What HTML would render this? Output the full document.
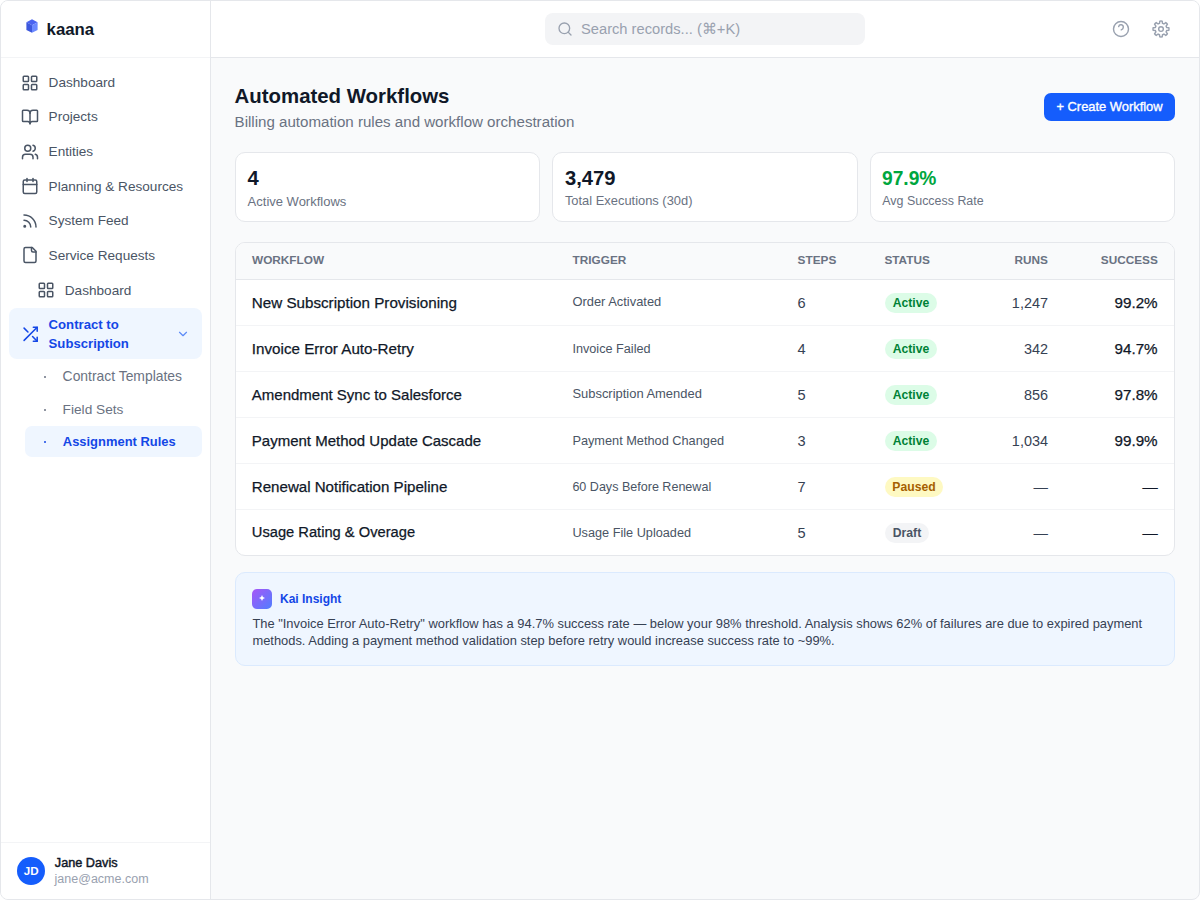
<!DOCTYPE html>
<html><head><meta charset="utf-8">
<style>
*{box-sizing:border-box;margin:0;padding:0}
html,body{width:1200px;height:900px;background:#fff;overflow:hidden}
body{font-family:"Liberation Sans",sans-serif;color:#101828;position:relative}
.frame{position:absolute;left:0;top:0;width:1200px;height:900px;border:1px solid #e5e7eb;border-radius:8px;overflow:hidden;background:#f9fafb}
.abs{position:absolute}
.t{position:absolute;line-height:1;white-space:nowrap}
.ic{position:absolute;overflow:visible}
.badge{position:absolute;height:20px;border-radius:10px}
</style></head><body>
<div class="frame"></div>
<!-- sidebar -->
<div class="abs" style="left:1px;top:1px;width:210px;height:898px;background:#fff;border-right:1px solid #e5e7eb;border-radius:7px 0 0 7px"></div>
<div class="abs" style="left:1px;top:57px;width:209px;height:1px;background:#f3f4f6"></div>
<div class="abs" style="left:1px;top:842px;width:209px;height:1px;background:#f3f4f6"></div>
<svg class="abs" style="left:26px;top:19px" width="12" height="14" viewBox="0 0 12 14">
  <polygon points="6,0.3 11.6,3.2 6,6.2 0.4,3.2" fill="#4a63f0"/>
  <polygon points="0.4,3.2 6,6.2 6,13.7 0.4,10.9" fill="#3d58dd"/>
  <polygon points="6,6.2 11.6,3.2 11.6,10.9 6,13.7" fill="#6b89ff"/>
</svg>
<div class="abs" style="left:9px;top:308px;width:193px;height:51px;background:#eff6ff;border-radius:8px"></div>
<div class="abs" style="left:25px;top:426px;width:177px;height:30.5px;background:#eff6ff;border-radius:7px"></div>
<div class="abs" style="left:43.5px;top:375.5px;width:2px;height:2px;border-radius:1px;background:#6a7282"></div>
<div class="abs" style="left:43.5px;top:408.5px;width:2px;height:2px;border-radius:1px;background:#6a7282"></div>
<div class="abs" style="left:43.5px;top:440.5px;width:2px;height:2px;border-radius:1px;background:#1447e6"></div>
<div class="abs" style="left:17px;top:857px;width:28px;height:28px;border-radius:14px;background:#155dfc"></div>
<!-- header -->
<div class="abs" style="left:211px;top:1px;width:988px;height:57px;background:#fff;border-bottom:1px solid #e5e7eb;border-radius:0 7px 0 0"></div>
<div class="abs" style="left:545px;top:13px;width:320px;height:32px;background:#f3f4f6;border-radius:8px"></div>
<!-- main -->
<div class="abs" style="left:1044px;top:93px;width:131px;height:28px;background:#155dfc;border-radius:7px"></div>
<div class="abs" style="left:235px;top:152px;width:305.33px;height:70px;background:#fff;border:1px solid #e5e7eb;border-radius:10px"></div>
<div class="abs" style="left:552.33px;top:152px;width:305.33px;height:70px;background:#fff;border:1px solid #e5e7eb;border-radius:10px"></div>
<div class="abs" style="left:869.67px;top:152px;width:305.33px;height:70px;background:#fff;border:1px solid #e5e7eb;border-radius:10px"></div>
<div class="abs" style="left:235px;top:242px;width:940px;height:314px;background:#fff;border:1px solid #e5e7eb;border-radius:10px;overflow:hidden">
  <div class="abs" style="left:0;top:0;width:938px;height:37px;background:#f9fafb;border-bottom:1px solid #e5e7eb"></div>
  <div class="abs" style="left:0;top:82px;width:938px;height:1px;background:#f3f4f6"></div>
  <div class="abs" style="left:0;top:128px;width:938px;height:1px;background:#f3f4f6"></div>
  <div class="abs" style="left:0;top:174px;width:938px;height:1px;background:#f3f4f6"></div>
  <div class="abs" style="left:0;top:220px;width:938px;height:1px;background:#f3f4f6"></div>
  <div class="abs" style="left:0;top:266px;width:938px;height:1px;background:#f3f4f6"></div>
</div>
<div class="badge" style="left:885px;top:292.90px;width:52px;background:#dcfce7"></div><div class="badge" style="left:885px;top:338.90px;width:52px;background:#dcfce7"></div><div class="badge" style="left:885px;top:384.90px;width:52px;background:#dcfce7"></div><div class="badge" style="left:885px;top:430.90px;width:52px;background:#dcfce7"></div><div class="badge" style="left:885px;top:476.90px;width:58px;background:#fef9c2"></div><div class="badge" style="left:885px;top:522.90px;width:44px;background:#f3f4f6"></div>
<div class="abs" style="left:235px;top:572px;width:940px;height:94px;background:#eff6ff;border:1px solid #dbeafe;border-radius:10px"></div>
<div class="abs" style="left:252px;top:589px;width:20px;height:20px;border-radius:5px;background:linear-gradient(135deg,#a855f7,#4f7fff)"></div>
<svg class="abs" style="left:259px;top:595px" width="6" height="6" viewBox="0 0 6 6"><path d="M3 0 Q3.4 2.6 6 3 Q3.4 3.4 3 6 Q2.6 3.4 0 3 Q2.6 2.6 3 0Z" fill="#fff"/></svg>
<svg class="ic" style="left:20.5px;top:74.0px;color:#4a5565" width="18" height="18" viewBox="0 0 24 24" fill="none" stroke="currentColor" stroke-width="2" stroke-linecap="round" stroke-linejoin="round"><rect x="3" y="3" width="7" height="7" rx="1"/><rect x="14" y="3" width="7" height="7" rx="1"/><rect x="14" y="14" width="7" height="7" rx="1"/><rect x="3" y="14" width="7" height="7" rx="1"/></svg><svg class="ic" style="left:20.5px;top:108.45px;color:#4a5565" width="18" height="18" viewBox="0 0 24 24" fill="none" stroke="currentColor" stroke-width="2" stroke-linecap="round" stroke-linejoin="round"><path d="M12 7v14"/><path d="M3 18a1 1 0 0 1-1-1V4a1 1 0 0 1 1-1h5a4 4 0 0 1 4 4 4 4 0 0 1 4-4h5a1 1 0 0 1 1 1v13a1 1 0 0 1-1 1h-6a3 3 0 0 0-3 3 3 3 0 0 0-3-3z"/></svg><svg class="ic" style="left:20.5px;top:142.9px;color:#4a5565" width="18" height="18" viewBox="0 0 24 24" fill="none" stroke="currentColor" stroke-width="2" stroke-linecap="round" stroke-linejoin="round"><path d="M16 21v-2a4 4 0 0 0-4-4H6a4 4 0 0 0-4 4v2"/><path d="M16 3.128a4 4 0 0 1 0 7.744"/><path d="M22 21v-2a4 4 0 0 0-3-3.87"/><circle cx="9" cy="7" r="4"/></svg><svg class="ic" style="left:20.5px;top:177.35000000000002px;color:#4a5565" width="18" height="18" viewBox="0 0 24 24" fill="none" stroke="currentColor" stroke-width="2" stroke-linecap="round" stroke-linejoin="round"><path d="M8 2v4"/><path d="M16 2v4"/><rect width="18" height="18" x="3" y="4" rx="2"/><path d="M3 10h18"/></svg><svg class="ic" style="left:20.5px;top:211.8px;color:#4a5565" width="18" height="18" viewBox="0 0 24 24" fill="none" stroke="currentColor" stroke-width="2" stroke-linecap="round" stroke-linejoin="round"><path d="M4 11a9 9 0 0 1 9 9"/><path d="M4 4a16 16 0 0 1 16 16"/><circle cx="5" cy="19" r="1"/></svg><svg class="ic" style="left:20.5px;top:246.25px;color:#4a5565" width="18" height="18" viewBox="0 0 24 24" fill="none" stroke="currentColor" stroke-width="2" stroke-linecap="round" stroke-linejoin="round"><path d="M15 2H6a2 2 0 0 0-2 2v16a2 2 0 0 0 2 2h12a2 2 0 0 0 2-2V7Z"/><path d="M14 2v4a2 2 0 0 0 2 2h4"/></svg><svg class="ic" style="left:36.7px;top:280.70000000000005px;color:#4a5565" width="18" height="18" viewBox="0 0 24 24" fill="none" stroke="currentColor" stroke-width="2" stroke-linecap="round" stroke-linejoin="round"><rect x="3" y="3" width="7" height="7" rx="1"/><rect x="14" y="3" width="7" height="7" rx="1"/><rect x="14" y="14" width="7" height="7" rx="1"/><rect x="3" y="14" width="7" height="7" rx="1"/></svg><svg class="ic" style="left:20.8px;top:325.0px;color:#1447e6" width="18.5" height="18.5" viewBox="0 0 24 24" fill="none" stroke="currentColor" stroke-width="2" stroke-linecap="round" stroke-linejoin="round"><polyline points="16 3 21 3 21 8"/><line x1="4" y1="20" x2="21" y2="3"/><polyline points="21 16 21 21 16 21"/><line x1="15" y1="15" x2="21" y2="21"/><line x1="4" y1="4" x2="9" y2="9"/></svg><svg class="ic" style="left:176px;top:327px;color:#5b8af7" width="14" height="14" viewBox="0 0 24 24" fill="none" stroke="currentColor" stroke-width="2" stroke-linecap="round" stroke-linejoin="round"><path d="m6 9 6 6 6-6"/></svg><svg class="ic" style="left:556.7px;top:20.7px;color:#99a1af" width="16" height="16" viewBox="0 0 24 24" fill="none" stroke="currentColor" stroke-width="2" stroke-linecap="round" stroke-linejoin="round"><circle cx="11" cy="11" r="8"/><path d="m21 21-4.3-4.3"/></svg><svg class="ic" style="left:1112px;top:19.9px;color:#99a1af" width="18" height="18" viewBox="0 0 24 24" fill="none" stroke="currentColor" stroke-width="1.9" stroke-linecap="round" stroke-linejoin="round"><circle cx="12" cy="12" r="10"/><path d="M8.9 8.8a3.1 3.1 0 0 1 6.1 1.1c0 1.9-2.7 3.2-2.7 3.2"/></svg><svg class="ic" style="left:1151px;top:19px;color:#99a1af" width="20" height="20" viewBox="0 0 24 24" fill="none" stroke="currentColor" stroke-width="1.7" stroke-linecap="round" stroke-linejoin="round"><path d="M10.19 5.24L10.58 2.51A9.6 9.6 0 0 1 13.42 2.51L13.81 5.24A7.0 7.0 0 0 1 15.50 5.94L17.71 4.28A9.6 9.6 0 0 1 19.72 6.29L18.06 8.50A7.0 7.0 0 0 1 18.76 10.19L21.49 10.58A9.6 9.6 0 0 1 21.49 13.42L18.76 13.81A7.0 7.0 0 0 1 18.06 15.50L19.72 17.71A9.6 9.6 0 0 1 17.71 19.72L15.50 18.06A7.0 7.0 0 0 1 13.81 18.76L13.42 21.49A9.6 9.6 0 0 1 10.58 21.49L10.19 18.76A7.0 7.0 0 0 1 8.50 18.06L6.29 19.72A9.6 9.6 0 0 1 4.28 17.71L5.94 15.50A7.0 7.0 0 0 1 5.24 13.81L2.51 13.42A9.6 9.6 0 0 1 2.51 10.58L5.24 10.19A7.0 7.0 0 0 1 5.94 8.50L4.28 6.29A9.6 9.6 0 0 1 6.29 4.28L8.50 5.94A7.0 7.0 0 0 1 10.19 5.24Z"/><circle cx="12" cy="12" r="2.8"/></svg>
<div class="t " style="left:46.60px;top:21.78px;font-size:16.8px;color:#101828;font-weight:bold;">kaana</div><div class="t " style="left:48.60px;top:75.79px;font-size:13.6px;color:#4a5565;">Dashboard</div><div class="t " style="left:48.60px;top:110.46px;font-size:13.6px;color:#4a5565;">Projects</div><div class="t " style="left:48.60px;top:145.13px;font-size:13.6px;color:#4a5565;">Entities</div><div class="t " style="left:48.60px;top:179.80px;font-size:13.6px;color:#4a5565;">Planning &amp; Resources</div><div class="t " style="left:48.60px;top:214.47px;font-size:13.6px;color:#4a5565;">System Feed</div><div class="t " style="left:48.60px;top:249.14px;font-size:13.6px;color:#4a5565;">Service Requests</div><div class="t " style="left:64.80px;top:283.81px;font-size:13.6px;color:#4a5565;">Dashboard</div><div class="t " style="left:48.60px;top:317.77px;font-size:13.15px;color:#1447e6;font-weight:bold;">Contract to</div><div class="t " style="left:48.60px;top:336.67px;font-size:13.15px;color:#1447e6;font-weight:bold;">Subscription</div><div class="t " style="left:62.60px;top:369.63px;font-size:13.9px;color:#6a7282;">Contract Templates</div><div class="t " style="left:62.60px;top:403.00px;font-size:13.7px;color:#6a7282;">Field Sets</div><div class="t " style="left:62.80px;top:436.04px;font-size:12.95px;color:#1447e6;font-weight:bold;">Assignment Rules</div><div class="t " style="left:54.80px;top:856.55px;font-size:12.7px;color:#101828;-webkit-text-stroke:0.45px currentColor;">Jane Davis</div><div class="t " style="left:54.60px;top:872.82px;font-size:12.5px;color:#99a1af;">jane@acme.com</div><div class="t " style="left:-268.80px;width:600px;text-align:center;top:865.38px;font-size:11.6px;color:#fff;font-weight:bold;">JD</div><div class="t " style="left:581.00px;top:22.16px;font-size:14.7px;color:#99a1af;">Search records... (⌘+K)</div><div class="t " style="left:234.60px;top:86.03px;font-size:20.4px;color:#101828;font-weight:bold;">Automated Workflows</div><div class="t " style="left:234.60px;top:114.22px;font-size:15.1px;color:#6a7282;">Billing automation rules and workflow orchestration</div><div class="t " style="left:809.50px;width:600px;text-align:center;top:100.98px;font-size:12.9px;color:#fff;-webkit-text-stroke:0.35px #fff;">+ Create Workflow</div><div class="t " style="left:247.60px;top:167.90px;font-size:20.2px;color:#101828;font-weight:bold;">4</div><div class="t " style="left:247.60px;top:194.60px;font-size:13.0px;color:#6a7282;">Active Workflows</div><div class="t " style="left:564.93px;top:167.90px;font-size:20.2px;color:#101828;font-weight:bold;">3,479</div><div class="t " style="left:564.93px;top:194.68px;font-size:12.9px;color:#6a7282;">Total Executions (30d)</div><div class="t " style="left:882.27px;top:167.90px;font-size:20.2px;color:#00a63e;font-weight:bold;transform:scaleX(0.95);transform-origin:0 0;">97.9%</div><div class="t " style="left:882.27px;top:195.06px;font-size:12.45px;color:#6a7282;">Avg Success Rate</div><div class="t " style="left:252.00px;top:254.81px;font-size:11.8px;color:#6a7282;font-weight:bold;">WORKFLOW</div><div class="t " style="left:572.60px;top:254.81px;font-size:11.8px;color:#6a7282;font-weight:bold;">TRIGGER</div><div class="t " style="left:797.60px;top:254.81px;font-size:11.8px;color:#6a7282;font-weight:bold;">STEPS</div><div class="t " style="left:884.40px;top:254.81px;font-size:11.8px;color:#6a7282;font-weight:bold;">STATUS</div><div class="t " style="right:152.00px;top:254.81px;font-size:11.8px;color:#6a7282;font-weight:bold;">RUNS</div><div class="t " style="right:42.20px;top:254.81px;font-size:11.8px;color:#6a7282;font-weight:bold;">SUCCESS</div><div class="t " style="left:251.80px;top:294.93px;font-size:15.2px;color:#101828;-webkit-text-stroke:0.25px currentColor;">New Subscription Provisioning</div><div class="t " style="left:572.40px;top:296.48px;font-size:12.9px;color:#4a5565;">Order Activated</div><div class="t " style="left:797.40px;top:295.94px;font-size:14.6px;color:#364153;">6</div><div class="t " style="right:152.00px;top:295.87px;font-size:14.45px;color:#364153;">1,247</div><div class="t " style="right:42.40px;top:294.63px;font-size:15.2px;color:#101828;-webkit-text-stroke:0.25px currentColor;">99.2%</div><div class="t " style="left:611.00px;width:600px;text-align:center;top:296.57px;font-size:12.2px;color:#008236;font-weight:bold;">Active</div><div class="t " style="left:251.80px;top:340.93px;font-size:15.2px;color:#101828;-webkit-text-stroke:0.25px currentColor;">Invoice Error Auto-Retry</div><div class="t " style="left:572.40px;top:342.67px;font-size:12.68px;color:#4a5565;">Invoice Failed</div><div class="t " style="left:797.40px;top:341.94px;font-size:14.6px;color:#364153;">4</div><div class="t " style="right:152.00px;top:341.87px;font-size:14.45px;color:#364153;">342</div><div class="t " style="right:42.40px;top:340.63px;font-size:15.2px;color:#101828;-webkit-text-stroke:0.25px currentColor;">94.7%</div><div class="t " style="left:611.00px;width:600px;text-align:center;top:342.57px;font-size:12.2px;color:#008236;font-weight:bold;">Active</div><div class="t " style="left:251.80px;top:387.10px;font-size:15.0px;color:#101828;-webkit-text-stroke:0.25px currentColor;">Amendment Sync to Salesforce</div><div class="t " style="left:572.40px;top:388.44px;font-size:12.95px;color:#4a5565;">Subscription Amended</div><div class="t " style="left:797.40px;top:387.94px;font-size:14.6px;color:#364153;">5</div><div class="t " style="right:152.00px;top:387.87px;font-size:14.45px;color:#364153;">856</div><div class="t " style="right:42.40px;top:386.63px;font-size:15.2px;color:#101828;-webkit-text-stroke:0.25px currentColor;">97.8%</div><div class="t " style="left:611.00px;width:600px;text-align:center;top:388.57px;font-size:12.2px;color:#008236;font-weight:bold;">Active</div><div class="t " style="left:251.80px;top:433.10px;font-size:15.0px;color:#101828;-webkit-text-stroke:0.25px currentColor;">Payment Method Update Cascade</div><div class="t " style="left:572.40px;top:434.61px;font-size:12.75px;color:#4a5565;">Payment Method Changed</div><div class="t " style="left:797.40px;top:433.94px;font-size:14.6px;color:#364153;">3</div><div class="t " style="right:152.00px;top:433.87px;font-size:14.45px;color:#364153;">1,034</div><div class="t " style="right:42.40px;top:432.63px;font-size:15.2px;color:#101828;-webkit-text-stroke:0.25px currentColor;">99.9%</div><div class="t " style="left:611.00px;width:600px;text-align:center;top:434.57px;font-size:12.2px;color:#008236;font-weight:bold;">Active</div><div class="t " style="left:251.80px;top:479.02px;font-size:15.1px;color:#101828;-webkit-text-stroke:0.25px currentColor;">Renewal Notification Pipeline</div><div class="t " style="left:572.40px;top:480.77px;font-size:12.56px;color:#4a5565;">60 Days Before Renewal</div><div class="t " style="left:797.40px;top:479.94px;font-size:14.6px;color:#364153;">7</div><div class="t " style="right:152.00px;top:479.87px;font-size:14.45px;color:#364153;">—</div><div class="t " style="right:42.40px;top:478.63px;font-size:15.2px;color:#101828;-webkit-text-stroke:0.25px currentColor;">—</div><div class="t " style="left:614.00px;width:600px;text-align:center;top:480.57px;font-size:12.2px;color:#a65f00;font-weight:bold;">Paused</div><div class="t " style="left:251.80px;top:525.36px;font-size:14.7px;color:#101828;-webkit-text-stroke:0.25px currentColor;">Usage Rating &amp; Overage</div><div class="t " style="left:572.40px;top:526.64px;font-size:12.71px;color:#4a5565;">Usage File Uploaded</div><div class="t " style="left:797.40px;top:525.94px;font-size:14.6px;color:#364153;">5</div><div class="t " style="right:152.00px;top:525.87px;font-size:14.45px;color:#364153;">—</div><div class="t " style="right:42.40px;top:524.63px;font-size:15.2px;color:#101828;-webkit-text-stroke:0.25px currentColor;">—</div><div class="t " style="left:607.00px;width:600px;text-align:center;top:526.57px;font-size:12.2px;color:#4a5565;font-weight:bold;">Draft</div><div class="t " style="left:280.00px;top:592.64px;font-size:12.0px;color:#1447e6;font-weight:bold;">Kai Insight</div><div class="t " style="left:252.40px;top:618.48px;font-size:12.9px;color:#364153;">The "Invoice Error Auto-Retry" workflow has a 94.7% success rate — below your 98% threshold. Analysis shows 62% of failures are due to expired payment</div><div class="t " style="left:252.40px;top:634.98px;font-size:12.9px;color:#364153;">methods. Adding a payment method validation step before retry would increase success rate to ~99%.</div>
</body></html>
